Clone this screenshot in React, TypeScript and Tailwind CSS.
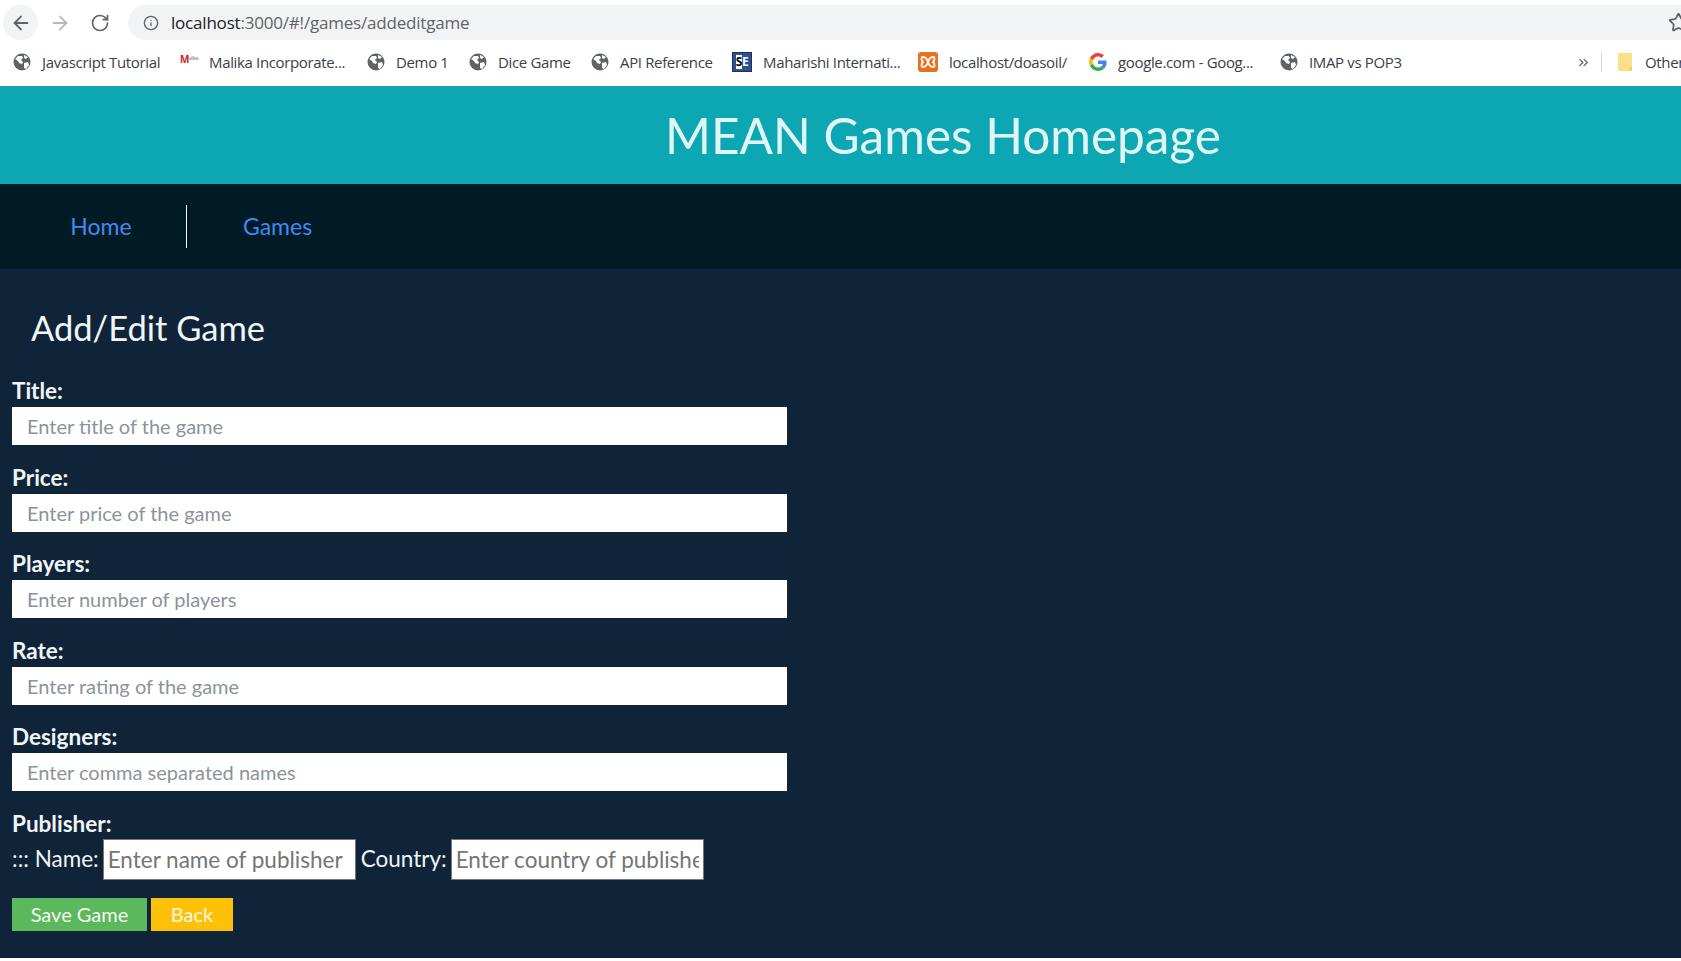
import React from 'react';
import { ArrowLeft, ArrowRight, RotateCw, Info, Star, ChevronsRight } from 'lucide-react';

const GlobeIcon = () => (
  <svg width="18" height="18" viewBox="0 0 18 18" className="shrink-0">
    <circle cx="9" cy="9" r="8.5" fill="#5f6368" />
    <path d="M2 6l3-3 4 0 1 2-2 2 2 2-1 2-3-1-1-2zM11 10l4-1 1 3-3 4-2-1zM11 2l4 2-2 2-2-1z" fill="#ffffff" />
  </svg>
);

const MalikaIcon = () => (
  <span className="w-[18px] h-[18px] shrink-0 flex items-start justify-start text-[10px] leading-[12px] font-bold text-[#d32027]">
    M<span className="text-[5px] leading-[10px] font-normal text-gray-500">alika</span>
  </span>
);

const SeIcon = () => (
  <span className="w-5 h-5 shrink-0 bg-[#2f4f8f] flex items-center justify-center text-[12px] font-bold text-white border border-[#1d2f5c]">
    <span className="text-black bg-white leading-[14px]">S</span>E
  </span>
);

const XamppIcon = () => (
  <svg width="20" height="20" viewBox="0 0 20 20" className="shrink-0">
    <rect x="0" y="0" width="20" height="20" rx="3" fill="#e8701f" />
    <path d="M5 5c3 0 4 2 5 5-1 3-2 5-5 5-2 0-2-3 0-5-2-2-2-5 0-5zM15 5c-3 0-4 2-5 5 1 3 2 5 5 5 2 0 2-3 0-5 2-2 2-5 0-5z" fill="none" stroke="#fff" strokeWidth="1.8" />
  </svg>
);

const GoogleIcon = () => (
  <svg width="18" height="18" viewBox="0 0 48 48" className="shrink-0">
    <path fill="#EA4335" d="M24 9.5c3.5 0 6.7 1.3 9.1 3.5l6.8-6.8C35.800 2.400 30.200 0 24 0 14.600 0 6.500 5.400 2.600 13.200l7.900 6.200C12.400 13.600 17.700 9.500 24 9.500z" />
    <path fill="#4285F4" d="M46.900 24.500c0-1.600-.1-3.100-.4-4.500H24v9h12.900c-.6 3-2.200 5.500-4.800 7.200l7.700 6c4.500-4.200 7.100-10.300 7.100-17.700z" />
    <path fill="#FBBC05" d="M10.500 28.600c-.5-1.400-.8-3-.8-4.600s.3-3.200.8-4.600l-7.900-6.200C.9 16.500 0 20.100 0 24s.9 7.500 2.600 10.800l7.900-6.200z" />
    <path fill="#34A853" d="M24 48c6.500 0 11.900-2.100 15.900-5.800l-7.700-6c-2.200 1.500-5 2.300-8.200 2.300-6.300 0-11.600-4.200-13.500-9.900l-7.900 6.200C6.500 42.600 14.600 48 24 48z" />
  </svg>
);

const FolderIcon = () => (
  <svg width="16" height="20" viewBox="0 0 16 20" className="shrink-0">
    <path d="M1 1h14v18H1z" fill="#fbe08a" />
    <path d="M12 19v-4h3v4z" fill="#f3cf68" />
  </svg>
);

const bookmarks = [
  { icon: <GlobeIcon />, label: 'Javascript Tutorial', width: 'w-[167px]' },
  { icon: <MalikaIcon />, label: 'Malika Incorporate...', width: 'w-[187px]' },
  { icon: <GlobeIcon />, label: 'Demo 1', width: 'w-[102px]' },
  { icon: <GlobeIcon />, label: 'Dice Game', width: 'w-[122px]' },
  { icon: <GlobeIcon />, label: 'API Reference', width: 'w-[141px]' },
  { icon: <SeIcon />, label: 'Maharishi Internati...', width: 'w-[186px]' },
  { icon: <XamppIcon />, label: 'localhost/doasoil/', width: 'w-[171px]' },
  { icon: <GoogleIcon />, label: 'google.com - Goog...', width: 'w-[191px]' },
  { icon: <GlobeIcon />, label: 'IMAP vs POP3', width: 'w-[140px]' },
];

const fields = [
  { label: 'Title:', placeholder: 'Enter title of the game' },
  { label: 'Price:', placeholder: 'Enter price of the game' },
  { label: 'Players:', placeholder: 'Enter number of players' },
  { label: 'Rate:', placeholder: 'Enter rating of the game' },
  { label: 'Designers:', placeholder: 'Enter comma separated names' },
];

export default function App() {
  return (
    <div className="h-[961px] overflow-hidden bg-white font-['Lato','Open_Sans',sans-serif]">
      {/* Browser chrome */}
      <div className="h-[40px] pt-[5px] pl-[3px] flex items-start">
        <div className="w-[35px] h-[35px] rounded-full bg-[#f1f3f4] flex items-center justify-center shrink-0">
          <ArrowLeft size={22} className="text-[#5f6368]" />
        </div>
        <div className="w-[44px] h-[35px] flex items-center justify-center shrink-0">
          <ArrowRight size={22} className="text-[#b5b8bc]" />
        </div>
        <div className="w-[36px] h-[35px] flex items-center justify-center shrink-0">
          <RotateCw size={20} className="text-[#5f6368]" />
        </div>
        <div className="ml-[10px] flex-1 h-[35px] rounded-l-full bg-[#f1f3f4] flex items-center pl-[15px] min-w-0">
          <Info size={16} className="text-[#5f6368] shrink-0" />
          <span className="ml-[12px] text-[17px] text-[#5f6368] font-['Open_Sans',sans-serif] tracking-[-0.2px]">
            <span className="text-[#202124]">localhost</span>:3000/#!/games/addeditgame
          </span>
          <Star size={21} className="ml-auto -mr-[8px] text-[#5f6368] shrink-0" />
        </div>
      </div>
      <div className="h-[46px] pl-[12px] pb-[2px] flex items-center whitespace-nowrap overflow-hidden text-[15px] text-[#3c4043] font-['Open_Sans',sans-serif] tracking-[-0.35px]">
        {bookmarks.map((b) => (
          <div key={b.label} className={`${b.width} shrink-0 flex items-center pl-[1px] gap-[11px]`}>
            {b.icon}
            <span>{b.label}</span>
          </div>
        ))}
        <ChevronsRight size={15} className="ml-[157px] text-[#5f6368] shrink-0" />
        <div className="ml-[10px] w-px h-[20px] bg-[#d5d7da] shrink-0" />
        <div className="ml-[15px] shrink-0">
          <FolderIcon />
        </div>
        <span className="ml-[12px] shrink-0">Other bookmarks</span>
      </div>

      {/* Page */}
      <header className="h-[98px] bg-[#0ca7b3] flex items-center justify-center pl-[205px] pt-[2px]">
        <h1 className="text-[49.5px] leading-none text-[#e0f5f5]">MEAN Games Homepage</h1>
      </header>
      <nav className="h-[85px] bg-[#001a26] flex items-center pl-[16px]">
        <a className="w-[171px] text-center text-[23px] text-[#3f8cee] border-r border-white leading-[42px] pb-[1px]">Home</a>
        <a className="w-[181px] text-center text-[23px] text-[#3f8cee] pb-[1px]">Games</a>
      </nav>
      <main className="h-[689px] bg-[#0f2438] text-[#f2f5f7] pl-[12px]">
        <h2 className="pl-[19px] pt-[37px] text-[34.5px] leading-[44px]">Add/Edit Game</h2>
        <form className="pt-[28px]">
          {fields.map((f) => (
            <div key={f.label} className="h-[86.5px] last:h-[84px]">
              <label className="block text-[22.5px] font-bold leading-[25px] mb-[4px]">{f.label}</label>
              <input
                placeholder={f.placeholder}
                className="block w-[775px] h-[38px] bg-white px-[15px] text-[20px] text-[#495057] placeholder:text-[#8b939b] outline-none"
              />
            </div>
          ))}
          <label className="block text-[22.5px] font-bold leading-[25px]">Publisher:</label>
          <div className="flex items-center h-[42px] mt-[2.5px] text-[22.5px]">
            <span>::: Name:</span>
            <input
              placeholder="Enter name of publisher"
              className="ml-[4px] w-[253px] h-[41px] bg-white border border-[#777] px-[4px] text-[22.5px] text-black placeholder:text-[#757575] outline-none"
            />
            <span className="ml-[5px]">Country:</span>
            <input
              placeholder="Enter country of publisher"
              className="ml-[4px] w-[253px] h-[41px] bg-white border border-[#777] px-[4px] text-[22.5px] text-black placeholder:text-[#757575] outline-none"
            />
          </div>
          <div className="flex gap-[4px] mt-[17.5px]">
            <button type="button" className="w-[135px] h-[33px] bg-[#5cb85c] text-[20px] text-[#f4f9f4]">
              Save Game
            </button>
            <button type="button" className="w-[82px] h-[33px] bg-[#ffc107] text-[20px] text-[#fff8e1]">
              Back
            </button>
          </div>
        </form>
      </main>
    </div>
  );
}
